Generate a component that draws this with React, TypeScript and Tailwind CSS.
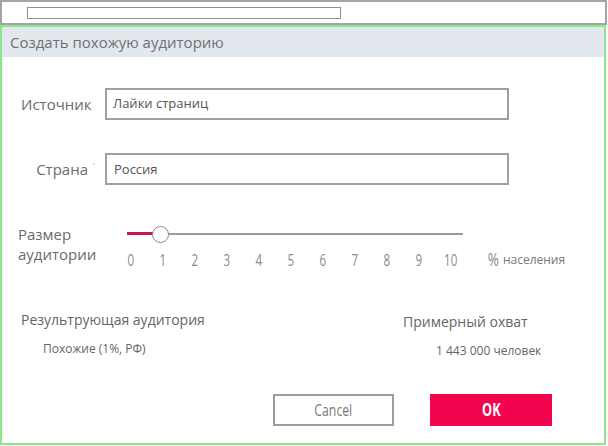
import React from 'react';

const ticks = ['0', '1', '2', '3', '4', '5', '6', '7', '8', '9', '10'];

const sans = { fontFamily: '"Open Sans", "Noto Sans", sans-serif' };

const App: React.FC = () => {
  return (
    <div className="flex h-[446px] w-[608px] flex-col bg-white text-[#6b6b6b]" style={sans}>
      {/* верхняя рамка */}
      <div className="flex h-[25px] w-[607px] shrink-0 items-center border-2 border-[#a4a4a4] pl-[25px]">
        <div className="h-[12px] w-[314px] border border-[#8f8f8f] bg-white" />
      </div>

      <div className="flex h-[420px] w-[606px] flex-col border-2 border-[#8ce68c]">
        <div className="flex h-[30px] items-center bg-[#e3e7ee] pl-[8px] text-[15px] text-[#707070]">
          Создать похожую аудиторию
        </div>

        <div className="mt-[31px] flex items-center">
          <div className="w-[103px] pl-[19px] text-[15px]">Источник</div>
          <div className="flex h-[32px] w-[404px] items-center border-2 border-[#a0a0a0] pl-[6px] text-[13px] text-[#555]">
            Лайки страниц
          </div>
        </div>

        <div className="mt-[33px] flex items-center">
          <div className="flex w-[103px] items-center justify-end pr-[10px] text-[15px]">
            Страна<span className="mb-[6px] ml-[5px] text-[9px] leading-none text-[#aaa]">'</span>
          </div>
          <div className="flex h-[32px] w-[404px] items-center border-2 border-[#a0a0a0] pl-[7px] pt-[2px] text-[13px] text-[#555]">
            Россия
          </div>
        </div>

        <div className="mt-[39px] flex">
          <div className="w-[113px] pl-[16px] text-[15px] leading-[20px]">
            Размер<br />аудитории
          </div>
          <div className="flex flex-col">
            <div className="relative ml-[12px] mt-[2px] h-[16px] w-[336px]">
              <div className="absolute left-0 top-[7px] h-[1.5px] w-full bg-[#9a9a9a]" />
              <div className="absolute left-0 top-[6px] h-[3px] w-[27px] bg-[#c8194f]" />
              <div className="absolute left-[25px] top-0 h-[17px] w-[17px] rounded-full border-[1.5px] border-[#8a8a8a] bg-white" />
            </div>
            <div className="mt-[4px] flex items-center text-[17px] text-[#8a8a8a]">
              {ticks.map(t => (
                <div key={t} className="w-[32px] text-center">
                  <span className="inline-block scale-x-[0.68]">{t}</span>
                </div>
              ))}
              <div className="ml-[19px] text-[18px]">
                <span className="inline-block scale-x-[0.75]">%</span>
              </div>
              <div className="ml-[2px] text-[12px] text-[#777]">населения</div>
            </div>
          </div>
        </div>

        <div className="mt-[36px] flex">
          <div className="w-[382px] pl-[19px]">
            <div className="text-[14px] text-[#666]">Результрующая аудитория</div>
            <div className="mt-[10px] pl-[22px] text-[12px] text-[#666]">Похожие (1%, РФ)</div>
          </div>
          <div className="pt-[2px]">
            <div className="pl-[19px] text-[14px] text-[#666]">Примерный охват</div>
            <div className="mt-[10px] pl-[52px] text-[12px] text-[#666]">1 443 000 человек</div>
          </div>
        </div>

        <div className="mt-auto mb-[17px] flex justify-end gap-[36px] pr-[52px]">
          <button className="flex h-[32px] w-[121px] items-center justify-center border-2 border-[#9c9c9c] bg-white text-[17px] text-[#7a7a7a]">
            <span className="inline-block scale-x-[0.72]">Cancel</span>
          </button>
          <button className="flex h-[32px] w-[122px] items-center justify-center bg-[#f2044f] text-[17px] font-bold text-white">
            <span className="inline-block scale-x-[0.75]">OK</span>
          </button>
        </div>
      </div>
    </div>
  );
};

export default App;
